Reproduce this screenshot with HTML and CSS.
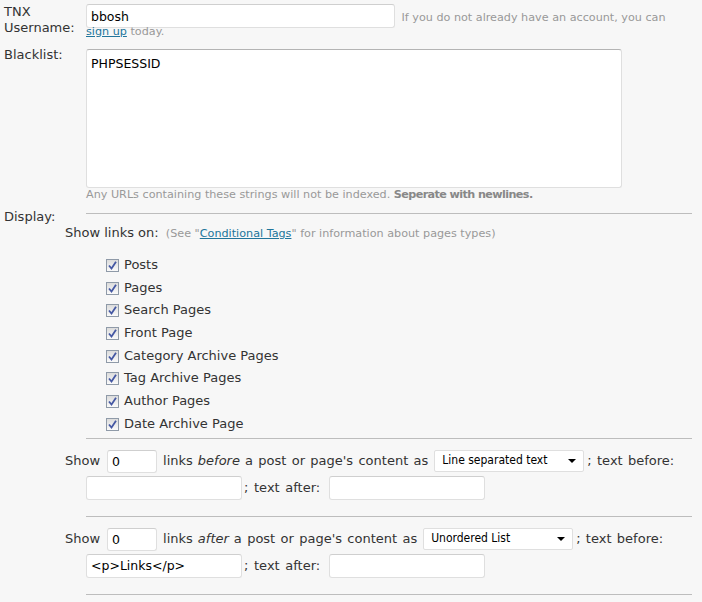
FILE: index.html
```html
<!DOCTYPE html>
<html>
<head>
<meta charset="utf-8">
<link rel="stylesheet" href="styles.css">
</head>
<body>
<div class="form">
  <div class="row row-user">
    <div class="th">TNX Username:</div>
    <div class="td td-user"><input class="text w309" type="text" value="bbosh"> <span class="hint">If you do not already have an account, you can<br><a href="#">sign up</a> today.</span></div>
  </div>
  <div class="row row-black">
    <div class="th">Blacklist:</div>
    <div class="td">
      <textarea class="area">PHPSESSID</textarea>
      <div class="hint">Any URLs containing these strings will not be indexed. <b>Seperate with newlines.</b></div>
    </div>
  </div>
  <div class="row row-display">
    <div class="th">Display:</div>
    <div class="td"><div class="rule rule-top"></div></div>
  </div>
  <div class="section">
    <div class="showon">Show links on: <span class="hint">(See "<a href="#">Conditional Tags</a>" for information about pages types)</span></div>
    <ul class="checks">
      <li><span class="cb"><svg width="13" height="13" viewBox="0 0 13 13"><path d="M3 6.5 L5.5 9.5 L10 2.8" fill="none" stroke="#4558a3" stroke-width="1.8"/></svg></span>Posts</li>
      <li><span class="cb"><svg width="13" height="13" viewBox="0 0 13 13"><path d="M3 6.5 L5.5 9.5 L10 2.8" fill="none" stroke="#4558a3" stroke-width="1.8"/></svg></span>Pages</li>
      <li><span class="cb"><svg width="13" height="13" viewBox="0 0 13 13"><path d="M3 6.5 L5.5 9.5 L10 2.8" fill="none" stroke="#4558a3" stroke-width="1.8"/></svg></span>Search Pages</li>
      <li><span class="cb"><svg width="13" height="13" viewBox="0 0 13 13"><path d="M3 6.5 L5.5 9.5 L10 2.8" fill="none" stroke="#4558a3" stroke-width="1.8"/></svg></span>Front Page</li>
      <li><span class="cb"><svg width="13" height="13" viewBox="0 0 13 13"><path d="M3 6.5 L5.5 9.5 L10 2.8" fill="none" stroke="#4558a3" stroke-width="1.8"/></svg></span>Category Archive Pages</li>
      <li><span class="cb"><svg width="13" height="13" viewBox="0 0 13 13"><path d="M3 6.5 L5.5 9.5 L10 2.8" fill="none" stroke="#4558a3" stroke-width="1.8"/></svg></span>Tag Archive Pages</li>
      <li><span class="cb"><svg width="13" height="13" viewBox="0 0 13 13"><path d="M3 6.5 L5.5 9.5 L10 2.8" fill="none" stroke="#4558a3" stroke-width="1.8"/></svg></span>Author Pages</li>
      <li><span class="cb"><svg width="13" height="13" viewBox="0 0 13 13"><path d="M3 6.5 L5.5 9.5 L10 2.8" fill="none" stroke="#4558a3" stroke-width="1.8"/></svg></span>Date Archive Page</li>
    </ul>
  </div>
  <div class="rule rule-full"></div>
  <div class="group">
    <div class="line1">Show <input class="text num" type="text" value="0"> links <em>before</em> a post or page's content as <span class="sel"><select class="select"><option>Line separated text</option></select></span>; text before:</div>
    <div class="line2"><input class="text w156" type="text" value="">; text after: <input class="text w156 after" type="text" value=""></div>
  </div>
  <div class="rule rule-full"></div>
  <div class="group">
    <div class="line1">Show <input class="text num" type="text" value="0"> links <em>after</em> a post or page's content as <span class="sel"><select class="select"><option>Unordered List</option></select></span>; text before:</div>
    <div class="line2"><input class="text w156" type="text" value="&lt;p&gt;Links&lt;/p&gt;">; text after: <input class="text w156 after" type="text" value=""></div>
  </div>
  <div class="rule rule-full"></div>
</div>
</body>
</html>
```
FILE: styles.css
```css
html, body {
  margin: 0;
  padding: 0;
  background: #f7f7f7;
}
body {
  font-family: "DejaVu Sans", Verdana, sans-serif;
  font-size: 13px;
  line-height: 16px;
  color: #333;
}
.form {
  padding: 4px 0 0 4px;
  width: 688px;
}
.row {
  display: flex;
  align-items: flex-start;
}
.th {
  width: 82px;
  flex: none;
  color: #333;
}
.row-user .th {
  width: 74px;
}
.row-user .td {
  margin-left: 8px;
}
.td {
  flex: 1;
  min-width: 0;
}
.td-user {
  font-size: 11px;
  line-height: 12px;
}
.hint {
  font-size: 11.2px;
  color: #999;
}
.hint b {
  color: #888;
  letter-spacing: -0.6px;
}
a {
  color: #21759b;
}
.text {
  box-sizing: border-box;
  height: 24px;
  border: 1px solid #dfdfdf;
  border-top-color: #cfcfcf;
  border-radius: 3px;
  background: #fff;
  font-family: "DejaVu Sans", Verdana, sans-serif;
  font-size: 12.5px;
  color: #000;
  padding: 0 4px;
  margin: 0;
  vertical-align: baseline;
  outline: none;
}
.w309 {
  width: 309px;
  margin-bottom: -2px;
  margin-right: 3px;
}
.row-black {
  margin-top: 9px;
}
.area {
  display: block;
  box-sizing: border-box;
  width: 536px;
  height: 139px;
  margin: 2px 0 0 0;
  border: 1px solid #dfdfdf;
  border-top-color: #b4b4b4;
  border-radius: 3px;
  background: #fff;
  font-family: "DejaVu Sans", Verdana, sans-serif;
  font-size: 12.5px;
  line-height: 15px;
  color: #000;
  padding: 6px 4px;
  resize: none;
  outline: none;
}
.row-black .hint {
  line-height: 13px;
}
.row-display {
  margin-top: 8px;
}
.rule {
  height: 1px;
  background: #bdbdbd;
}
.rule-top {
  margin-top: 4px;
}
.rule-full {
  margin-left: 82px;
  width: 606px;
}
.section {
  padding-left: 61px;
}
.showon .hint {
  margin-left: 3px;
}
.checks {
  list-style: none;
  margin: 12px 0 2px 0;
  padding: 0 0 0 41px;
}
.checks li {
  height: 22.7px;
  line-height: 22.7px;
  display: flex;
  align-items: center;
}
.cb {
  display: block;
  width: 13px;
  height: 13px;
  box-sizing: border-box;
  border: 1px solid #8f9aa8;
  background: linear-gradient(#dcdcdc, #fafafa);
  margin-right: 5px;
  position: relative;
}
.cb svg {
  position: absolute;
  left: -1px;
  top: -1px;
}
.group {
  padding: 11px 0 16px 61px;
  white-space: nowrap;
}
.line1 {
  height: 23px;
  display: flex;
  align-items: center;
  word-spacing: 1.2px;
}
.line1 .num {
  width: 50px;
  height: 23px;
  margin: 0 6px 0 7px;
}
.line1 em {
  margin: 0 5px;
}
.sel {
  position: relative;
  display: inline-block;
  margin: 0 3px 0 6px;
  word-spacing: 0;
}
.sel::after {
  content: "";
  position: absolute;
  right: 8px;
  top: 9px;
  border-left: 4px solid transparent;
  border-right: 4px solid transparent;
  border-top: 4px solid #000;
}
.select {
  appearance: none;
  -webkit-appearance: none;
  box-sizing: border-box;
  width: 150px;
  height: 22px;
  border: 1px solid #dfdfdf;
  border-radius: 2px;
  background: #fff;
  font-family: "DejaVu Sans Condensed", Tahoma, sans-serif;
  font-size: 12px;
  color: #000;
  padding: 0 0 2px 7px;
  margin: 0;
  display: block;
  outline: none;
}
.line2 {
  display: flex;
  align-items: center;
  margin-top: 3px;
  padding-left: 21px;
  word-spacing: 1.5px;
}
.line2 .w156 {
  width: 156px;
  margin-right: 2px;
}
.line2 .after {
  margin-left: 9px;
}
```
